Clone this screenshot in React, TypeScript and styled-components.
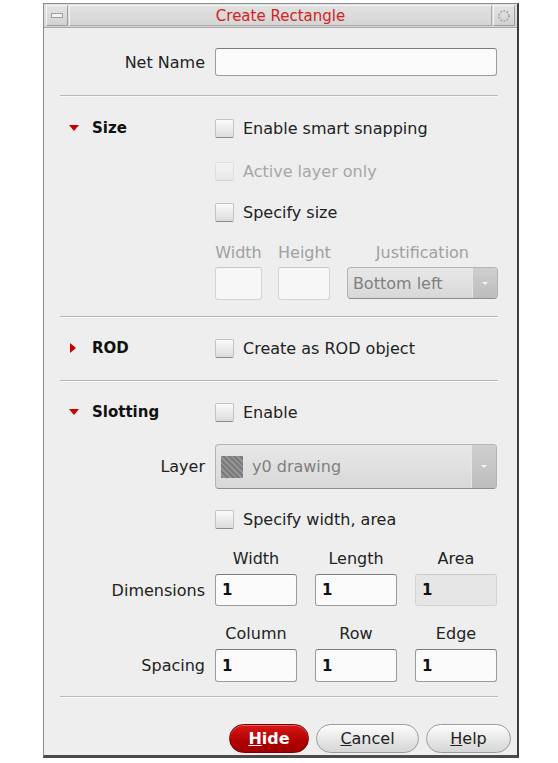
import { FC, ReactNode } from 'react';
import styled, { createGlobalStyle, css } from 'styled-components';

const GlobalStyle = createGlobalStyle`
  html, body {
    margin: 0;
    padding: 0;
    background: #ffffff;
  }
  body {
    font-family: "DejaVu Sans", "Liberation Sans", sans-serif;
    font-size: 16px;
    color: #222;
  }
`;

const Page = styled.div`
  padding: 3px 0 0 43px;
`;

const Window = styled.div`
  width: 476px;
  height: 755px;
  box-sizing: border-box;
  border: 1px solid #8c8c8c;
  border-right: 2px solid #3c3c3c;
  border-bottom: 3px solid #4a4a4a;
  background: #eeeeee;
  display: flex;
  flex-direction: column;
`;

const TitleBar = styled.div`
  height: 24px;
  box-sizing: border-box;
  display: flex;
  align-items: stretch;
  padding: 1px 2px 1px 2px;
  gap: 1px;
  background: linear-gradient(#e2e2e2, #d4d4d4);
  border-bottom: 1px solid #a8a8a8;
`;

const TitleButton = styled.div`
  width: 22px;
  display: flex;
  align-items: center;
  justify-content: center;
  background: linear-gradient(#e4e4e4, #d2d2d2);
  border: 1px solid #f4f4f4;
  border-right-color: #9c9c9c;
  border-bottom-color: #9c9c9c;
  box-sizing: border-box;
`;

const MinBar = styled.div`
  width: 10px;
  height: 3px;
  border: 1px solid #a0a0a0;
  background: #f2f2f2;
`;

const Title = styled.div`
  flex: 1;
  display: flex;
  align-items: center;
  justify-content: center;
  color: #d42222;
  font-size: 15px;
  border: 1px solid #f4f4f4;
  border-right-color: #a8a8a8;
  border-bottom-color: #a8a8a8;
`;

const Content = styled.div`
  padding: 0 19px 0 16px;
  display: flex;
  flex-direction: column;
`;

const Row = styled.div<{ $mt: number; $h: number }>`
  display: grid;
  grid-template-columns: 145px 282px;
  column-gap: 10px;
  align-items: center;
  margin-top: ${p => p.$mt}px;
  height: ${p => p.$h}px;
`;

const Label = styled.div`
  text-align: right;
  white-space: nowrap;
`;

const SectionHead = styled.div`
  display: flex;
  align-items: center;
  padding-left: 9px;
  font-weight: bold;
  font-size: 15px;
  color: #111;
`;

const Tri = styled.span<{ $open: boolean }>`
  width: 0;
  height: 0;
  margin-right: 13px;
  ${p => p.$open
    ? css`
        border-left: 5px solid transparent;
        border-right: 5px solid transparent;
        border-top: 6px solid #c40000;
      `
    : css`
        border-top: 5px solid transparent;
        border-bottom: 5px solid transparent;
        border-left: 6px solid #c40000;
        margin-left: 1px;
        margin-right: 16px;
      `}
`;

const Separator = styled.div<{ $mt: number }>`
  margin-top: ${p => p.$mt}px;
  height: 1px;
  background: #b9b9b9;
  box-shadow: 0 1px 0 #fafafa;
`;

const CheckRow = styled.label<{ $disabled?: boolean }>`
  display: flex;
  align-items: center;
  gap: 9px;
  white-space: nowrap;
  color: ${p => (p.$disabled ? '#a6a6a6' : '#222')};
`;

const Box = styled.span<{ $disabled?: boolean }>`
  width: 19px;
  height: 19px;
  flex: none;
  box-sizing: border-box;
  border-radius: 2px;
  border: 1px solid ${p => (p.$disabled ? '#dedede' : '#c4c4c4')};
  border-bottom-color: ${p => (p.$disabled ? '#d4d4d4' : '#8a8a8a')};
  background: ${p =>
    p.$disabled
      ? 'linear-gradient(#f4f4f4, #e8e8e8)'
      : 'linear-gradient(#fbfbfb, #dcdcdc)'};
`;

const TextInput = styled.div<{ $w?: number; $h?: number; $disabled?: boolean; $grey?: boolean }>`
  width: ${p => (p.$w ? `${p.$w}px` : '100%')};
  height: ${p => p.$h ?? 28}px;
  box-sizing: border-box;
  border-radius: 3px;
  border: 1px solid ${p => (p.$disabled ? '#d4d4d4' : '#9c9c9c')};
  border-top-color: ${p => (p.$disabled ? '#c8c8c8' : '#7e7e7e')};
  background: ${p => (p.$grey ? '#e6e6e6' : p.$disabled ? '#f7f7f7' : '#fbfbfb')};
  display: flex;
  align-items: center;
  padding-left: 6px;
  font-weight: bold;
  font-size: 15px;
  color: #111;
`;

const FieldGroup = styled.div`
  display: flex;
  gap: 16px;
  margin-top: 17px;
  margin-left: 155px;
`;

const Field = styled.div`
  display: flex;
  flex-direction: column;
  align-items: center;
  gap: 4px;
`;

const SubLabel = styled.div<{ $disabled?: boolean }>`
  height: 20px;
  line-height: 20px;
  white-space: nowrap;
  color: ${p => (p.$disabled ? '#a0a0a0' : '#222')};
  text-align: center;
`;

const Combo = styled.div<{ $w?: number; $h: number }>`
  width: ${p => (p.$w ? `${p.$w}px` : '100%')};
  height: ${p => p.$h}px;
  box-sizing: border-box;
  border-radius: 4px;
  border: 1px solid #b4b4b4;
  border-bottom-color: #8e8e8e;
  background: linear-gradient(#e8e8e8, #d8d8d8);
  display: flex;
  align-items: stretch;
  color: #808080;
  overflow: hidden;
`;

const ComboText = styled.div`
  flex: 1;
  display: flex;
  align-items: center;
  gap: 9px;
  padding-left: 5px;
  white-space: nowrap;
`;

const ComboArrow = styled.div`
  width: 24px;
  display: flex;
  align-items: center;
  justify-content: center;
  background: linear-gradient(#cfcfcf, #bdbdbd);
  border-left: 1px solid #e6e6e6;
  &::after {
    content: '';
    border-left: 3px solid transparent;
    border-right: 3px solid transparent;
    border-top: 3px solid #f4f4f4;
  }
`;

const Swatch = styled.span`
  width: 22px;
  height: 22px;
  background:
    repeating-linear-gradient(45deg, #7a7a7a 0 2px, #949494 2px 4px),
    #888;
`;

const Trio = styled.div`
  display: grid;
  grid-template-columns: repeat(3, 82px);
  column-gap: 18px;
  align-items: center;
`;

const ButtonBar = styled.div`
  display: flex;
  justify-content: flex-end;
  gap: 7px;
  margin-top: 27px;
  padding-right: 6px;
`;

const Button = styled.button<{ $primary?: boolean; $w: number }>`
  width: ${p => p.$w}px;
  height: 29px;
  border-radius: 15px;
  font-family: inherit;
  font-size: 16px;
  padding: 0;
  cursor: pointer;
  ${p => p.$primary
    ? css`
        border: 1px solid #7a0000;
        background: linear-gradient(#d81818, #b00000 60%, #a00000);
        color: #fff;
        font-weight: bold;
        box-shadow: inset 0 1px 0 #e86060;
      `
    : css`
        border: 1px solid #9a9a9a;
        background: linear-gradient(#fdfdfd, #e6e6e6 55%, #d6d6d6);
        color: #222;
        box-shadow: inset 0 1px 0 #ffffff;
      `}
`;

const SettingsRing: FC = () => (
  <svg width="14" height="14" viewBox="0 0 14 14">
    <circle cx="7" cy="7" r="5" fill="none" stroke="#a8a8a8" strokeWidth="2" strokeDasharray="1.6 1.6" />
  </svg>
);

const Check: FC<{ children: ReactNode; disabled?: boolean }> = ({ children, disabled }) => (
  <CheckRow $disabled={disabled}>
    <Box $disabled={disabled} />
    {children}
  </CheckRow>
);

const App: FC = () => {
  return (
    <Page>
      <GlobalStyle />
      <Window>
        <TitleBar>
          <TitleButton>
            <MinBar />
          </TitleButton>
          <Title>Create Rectangle</Title>
          <TitleButton>
            <SettingsRing />
          </TitleButton>
        </TitleBar>

        <Content>
          <Row $mt={20} $h={28}>
            <Label>Net Name</Label>
            <TextInput $h={28} />
          </Row>

          <Separator $mt={19} />

          <Row $mt={18} $h={28}>
            <SectionHead><Tri $open />Size</SectionHead>
            <Check>Enable smart snapping</Check>
          </Row>
          <Row $mt={15} $h={28}>
            <span />
            <Check disabled>Active layer only</Check>
          </Row>
          <Row $mt={13} $h={28}>
            <span />
            <Check>Specify size</Check>
          </Row>

          <FieldGroup>
            <Field>
              <SubLabel $disabled>Width</SubLabel>
              <TextInput $w={47} $h={33} $disabled />
            </Field>
            <Field>
              <SubLabel $disabled>Height</SubLabel>
              <TextInput $w={52} $h={33} $disabled />
            </Field>
            <Field>
              <SubLabel $disabled>Justification</SubLabel>
              <Combo $w={151} $h={32}>
                <ComboText>Bottom left</ComboText>
                <ComboArrow />
              </Combo>
            </Field>
          </FieldGroup>

          <Separator $mt={16} />

          <Row $mt={17} $h={28}>
            <SectionHead><Tri $open={false} />ROD</SectionHead>
            <Check>Create as ROD object</Check>
          </Row>

          <Separator $mt={18} />

          <Row $mt={17} $h={28}>
            <SectionHead><Tri $open />Slotting</SectionHead>
            <Check>Enable</Check>
          </Row>
          <Row $mt={18} $h={45}>
            <Label>Layer</Label>
            <Combo $h={45}>
              <ComboText><Swatch />y0 drawing</ComboText>
              <ComboArrow />
            </Combo>
          </Row>
          <Row $mt={16} $h={28}>
            <span />
            <Check>Specify width, area</Check>
          </Row>

          <Row $mt={16} $h={20}>
            <span />
            <Trio>
              <SubLabel>Width</SubLabel>
              <SubLabel>Length</SubLabel>
              <SubLabel>Area</SubLabel>
            </Trio>
          </Row>
          <Row $mt={5} $h={32}>
            <Label>Dimensions</Label>
            <Trio>
              <TextInput $h={32}>1</TextInput>
              <TextInput $h={32}>1</TextInput>
              <TextInput $h={32} $grey $disabled>1</TextInput>
            </Trio>
          </Row>

          <Row $mt={18} $h={20}>
            <span />
            <Trio>
              <SubLabel>Column</SubLabel>
              <SubLabel>Row</SubLabel>
              <SubLabel>Edge</SubLabel>
            </Trio>
          </Row>
          <Row $mt={5} $h={33}>
            <Label>Spacing</Label>
            <Trio>
              <TextInput $h={33}>1</TextInput>
              <TextInput $h={33}>1</TextInput>
              <TextInput $h={33}>1</TextInput>
            </Trio>
          </Row>

          <Separator $mt={14} />
        </Content>

        <ButtonBar>
          <Button $primary $w={80}><u>H</u>ide</Button>
          <Button $w={103}><u>C</u>ancel</Button>
          <Button $w={85}><u>H</u>elp</Button>
        </ButtonBar>
      </Window>
    </Page>
  );
};

export default App;
